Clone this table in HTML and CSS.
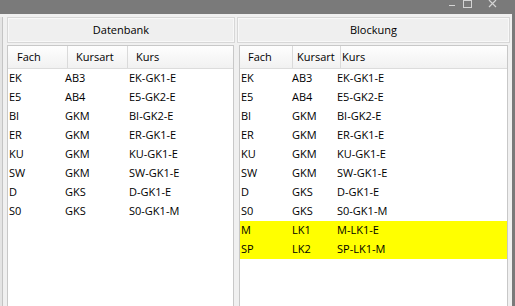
FILE: index.html
```html
<!DOCTYPE html>
<html lang="de">
<head>
    <meta charset="UTF-8">
    <title>Kurswahl - Blockung</title>
    <link rel="stylesheet" href="styles.css">
</head>
<body>
    <div class="titlebar">
        <svg class="win-controls" width="60" height="14" viewBox="0 0 60 14">
            <line x1="2" y1="5.5" x2="8" y2="5.5" stroke="#d4d4d4" stroke-width="1"/>
            <rect x="16.5" y="0.5" width="8" height="7" fill="none" stroke="#d4d4d4" stroke-width="1"/>
            <path d="M42 0 L49 7 M49 0 L42 7" stroke="#d4d4d4" stroke-width="1.2" fill="none"/>
        </svg>
    </div>
    <div class="content">
        <div class="stub"></div>

        <!-- Datenbank: alle Kurse -->
        <section class="panel panel-left">
            <div class="panel-title">Datenbank</div>
            <div class="list">
                <div class="list-head">
                    <div class="col c1">Fach</div>
                    <div class="col c2">Kursart</div>
                    <div class="col c3">Kurs</div>
                </div>
                <div class="row"><span>EK</span><span>AB3</span><span>EK-GK1-E</span></div>
                <div class="row"><span>E5</span><span>AB4</span><span>E5-GK2-E</span></div>
                <div class="row"><span>BI</span><span>GKM</span><span>BI-GK2-E</span></div>
                <div class="row"><span>ER</span><span>GKM</span><span>ER-GK1-E</span></div>
                <div class="row"><span>KU</span><span>GKM</span><span>KU-GK1-E</span></div>
                <div class="row"><span>SW</span><span>GKM</span><span>SW-GK1-E</span></div>
                <div class="row"><span>D</span><span>GKS</span><span>D-GK1-E</span></div>
                <div class="row"><span>S0</span><span>GKS</span><span>S0-GK1-M</span></div>
            </div>
        </section>

        <!-- Blockung: gewählte Kurse, Leistungskurse markiert -->
        <section class="panel panel-right">
            <div class="panel-title">Blockung</div>
            <div class="list">
                <div class="list-head">
                    <div class="col c1">Fach</div>
                    <div class="col c2">Kursart</div>
                    <div class="col c3">Kurs</div>
                </div>
                <div class="row"><span>EK</span><span>AB3</span><span>EK-GK1-E</span></div>
                <div class="row"><span>E5</span><span>AB4</span><span>E5-GK2-E</span></div>
                <div class="row"><span>BI</span><span>GKM</span><span>BI-GK2-E</span></div>
                <div class="row"><span>ER</span><span>GKM</span><span>ER-GK1-E</span></div>
                <div class="row"><span>KU</span><span>GKM</span><span>KU-GK1-E</span></div>
                <div class="row"><span>SW</span><span>GKM</span><span>SW-GK1-E</span></div>
                <div class="row"><span>D</span><span>GKS</span><span>D-GK1-E</span></div>
                <div class="row"><span>S0</span><span>GKS</span><span>S0-GK1-M</span></div>
                <div class="row lk"><span>M</span><span>LK1</span><span>M-LK1-E</span></div>
                <div class="row lk"><span>SP</span><span>LK2</span><span>SP-LK1-M</span></div>
            </div>
        </section>
    </div>
</body>
</html>
```

FILE: styles.css
```css
body {
    margin: 0;
    width: 515px;
    height: 306px;
    overflow: hidden;
    background: #f0f0f0;
    font-family: 'Open Sans', sans-serif;
    font-size: 11px;
    color: #000;
}
.titlebar {
    height: 14px;
    background: #7a7a7a;
    display: flex;
    justify-content: flex-end;
    padding-right: 8px;
}
.win-controls {
    display: block;
}
.content {
    display: flex;
    height: 292px;
    border-right: 3px solid #7a7a7a;
}
.stub {
    width: 2px;
    margin-right: 4px;
    margin-top: 3px;
    background: #e4e4e4;
    border-right: 1px solid #c4c4c4;
}
.panel {
    display: flex;
    flex-direction: column;
    padding-top: 3px;
}
.panel-left {
    width: 228px;
}
.panel-right {
    width: 273px;
    margin-left: 2px;
}
.panel-title {
    height: 24px;
    line-height: 23px;
    text-align: center;
    border: 1px solid #d7d7d7;
    background: #efefef;
    box-shadow: inset 0 0 0 1px #f8f8f8;
}
.list {
    flex: 1;
    margin-top: 2px;
    background: #fff;
    border: 1px solid #c8c8c8;
    border-bottom: none;
}
.panel-left .list {
    margin-right: 1px;
}
.panel-right .list {
    margin-left: 2px;
    margin-right: 2px;
}
.list-head {
    display: grid;
    height: 22px;
    border-bottom: 1px solid #dcdcdc;
    background: linear-gradient(#fefefe, #f1f1f1);
}
.panel-left .list-head {
    grid-template-columns: 60px 60px 1fr;
}
.panel-right .list-head {
    grid-template-columns: 53px 48px 1fr;
}
.list-head .col {
    line-height: 22px;
    border-right: 1px solid #dadada;
    box-sizing: border-box;
}
.list-head .c3 {
    border-right: none;
}
.panel-left .c1 { padding-left: 9px; }
.panel-left .c2 { padding-left: 8px; }
.panel-left .c3 { padding-left: 8px; }
.panel-right .c1 { padding-left: 8px; }
.panel-right .c2 { padding-left: 4px; }
.panel-right .c3 { padding-left: 1px; }
.row {
    display: grid;
    height: 19px;
    line-height: 17px;
    padding-left: 1px;
}
.panel-left .row {
    grid-template-columns: 56px 64px 1fr;
}
.panel-right .row {
    grid-template-columns: 51px 45px 1fr;
}
.row.lk {
    background: #ffff00;
}
```
